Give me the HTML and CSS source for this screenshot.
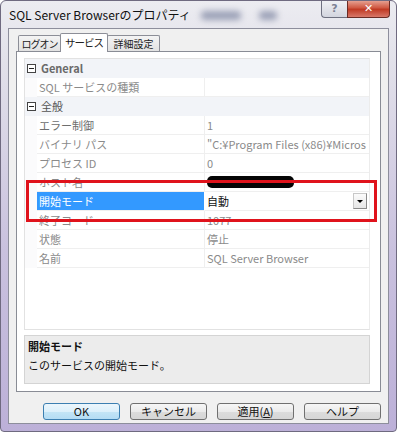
FILE: index.html
```html
<!DOCTYPE html>
<html lang="ja">

<head>
    <meta charset="UTF-8">
    <title>SQL Server Browserのプロパティ</title>
    <link rel="stylesheet" href="styles.css">
</head>

<body>
    <div class="window">
        <div class="titlebar">
            <span class="title">SQL Server Browserのプロパティ</span>
            <span class="smudge s1"></span>
            <span class="smudge s2"></span>
            <div class="caption">
                <span class="cap help">?</span>
                <span class="cap close">✕</span>
            </div>
        </div>

        <div class="client">
            <div class="tabs">
                <span class="tab t1">ログオン</span>
                <span class="tab t2 active">サービス</span>
                <span class="tab t3">詳細設定</span>
            </div>

            <div class="page">
                <!-- プロパティグリッド -->
                <div class="grid">
                    <div class="row cat">
                        <span class="gutter"><i class="toggle"></i></span>
                        <span class="name">General</span>
                    </div>
                    <div class="row">
                        <span class="gutter"></span>
                        <span class="name">SQL サービスの種類</span>
                        <span class="value"></span>
                    </div>
                    <div class="row cat">
                        <span class="gutter"><i class="toggle"></i></span>
                        <span class="name">全般</span>
                    </div>
                    <div class="row">
                        <span class="gutter"></span>
                        <span class="name dark">エラー制御</span>
                        <span class="value">1</span>
                    </div>
                    <div class="row">
                        <span class="gutter"></span>
                        <span class="name">バイナリ パス</span>
                        <span class="value"><span class="clip">"C:¥Program Files (x86)¥Micros</span></span>
                    </div>
                    <div class="row">
                        <span class="gutter"></span>
                        <span class="name">プロセス ID</span>
                        <span class="value">0</span>
                    </div>
                    <div class="row">
                        <span class="gutter"></span>
                        <span class="name">ホスト名</span>
                        <span class="value"><b class="redact"></b></span>
                    </div>
                    <div class="row selected">
                        <span class="gutter"></span>
                        <span class="name">開始モード</span>
                        <span class="value">自動<span class="drop"></span></span>
                    </div>
                    <div class="row">
                        <span class="gutter"></span>
                        <span class="name">終了コード</span>
                        <span class="value">1077</span>
                    </div>
                    <div class="row">
                        <span class="gutter"></span>
                        <span class="name">状態</span>
                        <span class="value">停止</span>
                    </div>
                    <div class="row">
                        <span class="gutter"></span>
                        <span class="name">名前</span>
                        <span class="value">SQL Server Browser</span>
                    </div>
                </div>

                <div class="desc">
                    <div class="desc-title">開始モード</div>
                    <div class="desc-text">このサービスの開始モード。</div>
                </div>
            </div>

            <div class="buttons">
                <span class="btn default">OK</span>
                <span class="btn">キャンセル</span>
                <span class="btn">適用(<u>A</u>)</span>
                <span class="btn">ヘルプ</span>
            </div>
        </div>

        <!-- 注目枠 -->
        <div class="mark"></div>
    </div>
</body>

</html>
```

FILE: styles.css
```css
html,
body {
    margin: 0;
    background-color: #fff;
}

body {
    font-family: "Noto Sans CJK JP", "DejaVu Sans", sans-serif;
    font-size: 11px;
    color: #1e1e1e;
}

.window {
    position: relative;
    width: 397px;
    height: 432px;
    box-sizing: border-box;
    border: 1px solid #6f6a80;
    border-radius: 6px 6px 4px 4px;
    background: linear-gradient(#ececf1 0, #e2e1ea 60px, #c9c1de 250px, #bcb0d8 432px);
    display: flex;
    flex-direction: column;
    overflow: hidden;
}

/* タイトルバー */
.titlebar {
    height: 27px;
    display: flex;
    align-items: center;
    padding-left: 8px;
    position: relative;
}

.title {
    font-size: 12px;
    line-height: 14px;
    color: #111;
    margin-top: 1px;
}

.smudge {
    height: 9px;
    background-color: #9aa0b6;
    filter: blur(3px);
    border-radius: 4px;
    margin-top: 2px;
}

.s1 {
    width: 40px;
    margin-left: 10px;
}

.s2 {
    width: 18px;
    margin-left: 18px;
}

.caption {
    position: absolute;
    top: -1px;
    right: 6px;
    display: flex;
}

.cap {
    height: 18px;
    display: flex;
    justify-content: center;
    align-items: center;
    box-sizing: border-box;
    border: 1px solid #6e7080;
    border-top: none;
    font-family: "DejaVu Sans", sans-serif;
}

.help {
    width: 26px;
    border-radius: 0 0 0 4px;
    border-right: none;
    background: linear-gradient(#f1f2f5, #d3d5df);
    color: #7d8294;
    font-size: 11px;
    font-weight: bold;
}

.close {
    width: 43px;
    border-color: #6b2c25;
    border-radius: 0 0 4px 0;
    background: linear-gradient(#e9a99b 0, #d05a44 45%, #c03a24 55%, #d8786a 100%);
    color: #fff;
    font-size: 11px;
    font-weight: bold;
}

/* クライアント領域 */
.client {
    margin: 0 7px;
    height: 396px;
    box-sizing: border-box;
    border: 1px solid #8d8e9c;
    background-color: #f0f0f0;
    display: flex;
    flex-direction: column;
}

.tabs {
    height: 22px;
    display: flex;
    align-items: flex-end;
    padding-left: 9px;
}

.tab {
    height: 15px;
    line-height: 15px;
    box-sizing: content-box;
    border: 1px solid #8c8e97;
    border-bottom: none;
    border-radius: 2px 2px 0 0;
    background: linear-gradient(#f4f4f4, #e2e2e2);
    color: #222;
    font-size: 10px;
    letter-spacing: -1px;
    text-align: center;
    margin-right: -1px;
}

.t1 {
    width: 41px;
}

.t2 {
    width: 46px;
}

.t3 {
    width: 51px;
    letter-spacing: 0;
}

.tab.active {
    height: 18px;
    line-height: 17px;
    font-size: 10.5px;
    background-color: #fff;
    background-image: none;
    position: relative;
    z-index: 1;
    margin-bottom: -1px;
}

.page {
    margin: 0 7px;
    height: 341px;
    box-sizing: border-box;
    border: 1px solid #898c95;
    background-color: #fff;
    padding: 6px 10px 0 7px;
}

/* プロパティグリッド */
.grid {
    height: 272px;
    box-sizing: border-box;
    border: 1px solid #e2e2e2;
    border-right-color: #ececec;
}

.row {
    display: flex;
    height: 19px;
    line-height: 18px;
    color: #8a8a8a;
}

.gutter {
    width: 12px;
    flex: none;
    display: flex;
    align-items: center;
    justify-content: center;
    background-color: #fbfbfc;
}

.toggle {
    width: 7px;
    height: 7px;
    border: 1px solid #444;
    position: relative;
    background-color: #fff;
}

.toggle::after {
    content: "";
    position: absolute;
    left: 1px;
    right: 1px;
    top: 3px;
    height: 1px;
    background-color: #222;
}

.name {
    width: 165px;
    flex: none;
    padding-left: 2px;
    border-bottom: 1px solid #efefef;
    border-right: 1px solid #efefef;
    white-space: nowrap;
    overflow: hidden;
}

.value {
    flex: 1;
    min-width: 0;
    padding-left: 2px;
    border-bottom: 1px solid #efefef;
    white-space: nowrap;
    overflow: hidden;
    position: relative;
    display: flex;
    align-items: center;
}

.clip {
    overflow: hidden;
    white-space: nowrap;
}

.row.cat {
    background-color: #f2f4f8;
}

.row.cat .gutter {
    background-color: #f2f4f8;
}

.row.cat .name {
    flex: 1;
    border: none;
    padding-left: 4px;
    color: #555;
}

.row.cat:first-child .name {
    font-weight: bold;
    color: #6a6a6a;
}

.name.dark {
    color: #6e6e6e;
}

.row.selected .name {
    background-color: #3399ff;
    color: #fff;
    border-right-color: #fff;
}

.row.selected .value {
    color: #111;
}

.drop {
    position: absolute;
    right: 2px;
    top: 1px;
    width: 14px;
    height: 16px;
    box-sizing: border-box;
    border: 1px solid #c8c8c8;
    border-right-color: #8a8a8a;
    border-bottom-color: #8a8a8a;
    background: linear-gradient(#fbfbfb, #e6e6e6);
}

.drop::after {
    content: "";
    position: absolute;
    left: 3px;
    top: 6px;
    border-left: 3px solid transparent;
    border-right: 3px solid transparent;
    border-top: 3px solid #000;
}

.redact {
    position: absolute;
    left: 2px;
    top: 3px;
    width: 87px;
    height: 12px;
    border-radius: 5px;
    background-color: #050505;
}

/* 説明欄 */
.desc {
    margin-top: 5px;
    height: 49px;
    box-sizing: border-box;
    border: 1px solid #d4d4d4;
    background-color: #ececec;
    padding: 1px 3px;
    color: #111;
}

.desc-title {
    font-weight: bold;
    line-height: 18px;
}

.desc-text {
    line-height: 20px;
}

/* ボタン */
.buttons {
    display: flex;
    gap: 10px;
    padding: 11px 0 0 34px;
}

.btn {
    width: 77px;
    height: 17px;
    box-sizing: border-box;
    border: 1px solid #707070;
    border-radius: 3px;
    background: linear-gradient(#f6f6f6 0, #ebebeb 50%, #dcdcdc 51%, #d6d6d6 100%);
    display: flex;
    justify-content: center;
    align-items: center;
    color: #111;
    line-height: 15px;
}

.btn.default {
    border-color: #3c7fb1;
    background: linear-gradient(#ecf6fc 0, #dcf0fb 50%, #c4e5f6 51%, #b4dcf4 100%);
}

.btn u {
    text-decoration: underline;
}

/* 赤い囲み */
.mark {
    position: absolute;
    left: 25px;
    top: 179px;
    width: 351px;
    height: 42px;
    box-sizing: border-box;
    border: 3px solid #e0131c;
}
```
